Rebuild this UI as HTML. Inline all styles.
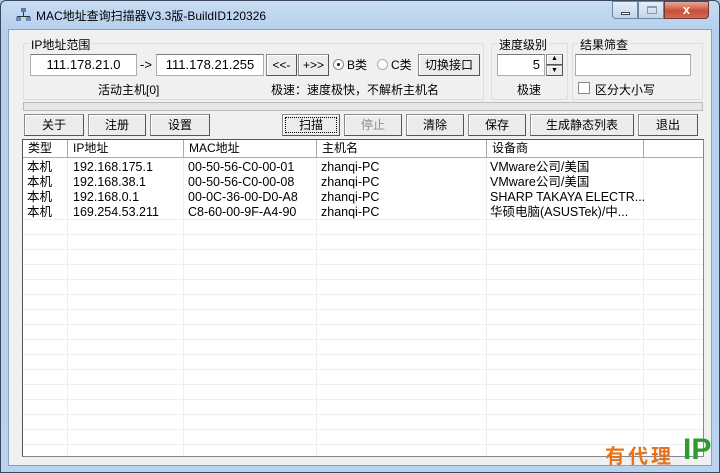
<!DOCTYPE html>
<html><head><meta charset="utf-8"><style>
*{box-sizing:border-box;margin:0;padding:0}
body{width:720px;height:473px;overflow:hidden;background:#a9c6e6;font-family:"Liberation Sans","Noto Sans CJK SC",sans-serif;font-size:12px;color:#000;position:relative}
.a{position:absolute}
.frame{left:0;top:0;width:720px;height:473px;border:1px solid #3b4a5e;border-radius:6px 6px 0 0;background:linear-gradient(#c8dcf2,#b5cfec 30px,#b9d3ef);}
.client{left:8px;top:29px;width:704px;height:437px;background:#f0f0f0;border:1px solid #8aa0bb}
.grp{border:1px solid #d5dfe5;border-radius:2px}
.lg{background:#f0f0f0;padding:0 2px;font-size:12px}
.inp{background:#fff;border:1px solid #abadb3;border-top-color:#7a7a7a;text-align:center;font-size:13px;line-height:20px}
.btn{border:1px solid #8c8c8c;border-right-color:#555;border-bottom-color:#555;box-shadow:inset 1px 1px 0 #fff;background:#ececec;text-align:center;line-height:20px;font-size:12px}
.hd{top:0;height:18px;border-right:1px solid #aaa;padding-left:5px;line-height:17px;background:#fff;border-bottom:1px solid #aaa}
.vl{top:18px;bottom:0;width:1px;background:#eee}
.hl{left:0;right:0;height:1px;background:#eee}
</style></head><body>
<div class="a frame"></div>
<svg class="a" style="left:16px;top:8px" width="16" height="14"><rect x="5" y="0" width="5" height="4" fill="#5a7ba8"/><rect x="7" y="4" width="1" height="4" fill="#333"/><rect x="1" y="8" width="13" height="1" fill="#333"/><rect x="0" y="9" width="5" height="4" fill="#6b8cbb"/><rect x="10" y="9" width="5" height="4" fill="#6b8cbb"/></svg>
<div class="a" style="left:36px;top:7px;font-size:12px;color:#000">MAC地址查询扫描器V3.3版-BuildID120326</div>
<div class="a" style="left:612px;top:1px;width:26px;height:18px;border:1px solid #6e86a3;border-radius:0 0 0 4px;background:linear-gradient(#e4eefa,#c2d5ec)"><div class="a" style="left:8px;top:10px;width:9px;height:3px;background:#fff;border:1px solid #445"></div></div>
<div class="a" style="left:638px;top:1px;width:26px;height:18px;border:1px solid #6e86a3;background:linear-gradient(#e4eefa,#c2d5ec)"><div class="a" style="left:8px;top:4px;width:10px;height:8px;border:1px solid #8899aa;border-top-width:2px"></div></div>
<div class="a" style="left:664px;top:1px;width:45px;height:18px;border:1px solid #6e3a32;border-radius:0 0 4px 0;background:linear-gradient(#e9a99a,#c7503a 55%,#d36c52);color:#fff;text-align:center;font-weight:bold;font-size:13px;line-height:16px">x</div>
<div class="a client"></div>

<div class="a grp" style="left:23px;top:43px;width:461px;height:57px"></div>
<div class="a lg" style="left:29px;top:36px">IP地址范围</div>
<div class="a inp" style="left:30px;top:54px;width:107px;height:22px">111.178.21.0</div>
<div class="a" style="left:140px;top:57px;font-size:13px">-&gt;</div>
<div class="a inp" style="left:156px;top:54px;width:108px;height:22px">111.178.21.255</div>
<div class="a btn" style="left:266px;top:54px;width:31px;height:22px">&lt;&lt;-</div>
<div class="a btn" style="left:298px;top:54px;width:31px;height:22px">+&gt;&gt;</div>
<div class="a" style="left:333px;top:59px;width:11px;height:11px;border-radius:50%;border:1px solid #888;background:#fff"><div class="a" style="left:3px;top:3px;width:3px;height:3px;border-radius:50%;background:#222"></div></div>
<div class="a" style="left:347px;top:56px">B类</div>
<div class="a" style="left:377px;top:59px;width:11px;height:11px;border-radius:50%;border:1px solid #aaa;background:#fff"></div>
<div class="a" style="left:391px;top:56px">C类</div>
<div class="a btn" style="left:418px;top:54px;width:62px;height:22px">切换接口</div>
<div class="a" style="left:98px;top:81px">活动主机[0]</div>
<div class="a" style="left:271px;top:81px">极速：速度极快，不解析主机名</div>

<div class="a grp" style="left:491px;top:43px;width:77px;height:57px"></div>
<div class="a lg" style="left:497px;top:36px">速度级别</div>
<div class="a inp" style="left:497px;top:54px;width:48px;height:22px;text-align:right;padding-right:4px">5</div>
<div class="a btn" style="left:546px;top:54px;width:17px;height:11px;line-height:8px;font-size:7px">▲</div>
<div class="a btn" style="left:546px;top:65px;width:17px;height:11px;line-height:9px;font-size:7px">▼</div>
<div class="a" style="left:517px;top:81px">极速</div>

<div class="a grp" style="left:572px;top:43px;width:131px;height:57px"></div>
<div class="a lg" style="left:578px;top:36px">结果筛查</div>
<div class="a inp" style="left:575px;top:54px;width:116px;height:22px"></div>
<div class="a" style="left:578px;top:82px;width:12px;height:12px;border:1px solid #888;background:#fff"></div>
<div class="a" style="left:595px;top:81px">区分大小写</div>

<div class="a" style="left:23px;top:102px;width:680px;height:9px;border:1px solid #bbb;background:#e6e6e6"></div>

<div class="a btn" style="left:24px;top:114px;width:60px;height:22px">关于</div>
<div class="a btn" style="left:88px;top:114px;width:58px;height:22px">注册</div>
<div class="a btn" style="left:150px;top:114px;width:60px;height:22px">设置</div>
<div class="a btn" style="left:282px;top:114px;width:58px;height:22px;outline:1px dotted #000;outline-offset:-4px">扫描</div>
<div class="a btn" style="left:344px;top:114px;width:58px;height:22px;color:#8d8d8d">停止</div>
<div class="a btn" style="left:406px;top:114px;width:58px;height:22px">清除</div>
<div class="a btn" style="left:468px;top:114px;width:58px;height:22px">保存</div>
<div class="a btn" style="left:530px;top:114px;width:104px;height:22px">生成静态列表</div>
<div class="a btn" style="left:638px;top:114px;width:60px;height:22px">退出</div>

<div class="a" style="left:22px;top:139px;width:682px;height:318px;background:#fff;border:1px solid #828790;border-left-color:#555;border-top-color:#555;overflow:hidden">
 <div class="a hd" style="left:0;width:45px">类型</div>
 <div class="a hd" style="left:45px;width:116px">IP地址</div>
 <div class="a hd" style="left:161px;width:133px">MAC地址</div>
 <div class="a hd" style="left:294px;width:170px">主机名</div>
 <div class="a hd" style="left:464px;width:157px">设备商</div>
 <div class="a hd" style="left:621px;width:60px"></div>
 <div class="a vl" style="left:44px"></div><div class="a vl" style="left:160px"></div><div class="a vl" style="left:293px"></div><div class="a vl" style="left:463px"></div><div class="a vl" style="left:620px"></div>
 <div class="a hl" style="top:79px"></div><div class="a hl" style="top:94px"></div><div class="a hl" style="top:109px"></div><div class="a hl" style="top:124px"></div><div class="a hl" style="top:139px"></div><div class="a hl" style="top:154px"></div><div class="a hl" style="top:169px"></div><div class="a hl" style="top:184px"></div><div class="a hl" style="top:199px"></div><div class="a hl" style="top:214px"></div><div class="a hl" style="top:229px"></div><div class="a hl" style="top:244px"></div><div class="a hl" style="top:259px"></div><div class="a hl" style="top:274px"></div><div class="a hl" style="top:289px"></div><div class="a hl" style="top:304px"></div>
 <div class="a" style="left:4px;top:20px;line-height:15px;width:700px;font-size:12.5px">
  <div style="position:relative;height:15px"><span class="a" style="left:0">本机</span><span class="a" style="left:46px">192.168.175.1</span><span class="a" style="left:161px">00-50-56-C0-00-01</span><span class="a" style="left:294px">zhanqi-PC</span><span class="a" style="left:463px">VMware公司/美国</span></div>
  <div style="position:relative;height:15px"><span class="a" style="left:0">本机</span><span class="a" style="left:46px">192.168.38.1</span><span class="a" style="left:161px">00-50-56-C0-00-08</span><span class="a" style="left:294px">zhanqi-PC</span><span class="a" style="left:463px">VMware公司/美国</span></div>
  <div style="position:relative;height:15px"><span class="a" style="left:0">本机</span><span class="a" style="left:46px">192.168.0.1</span><span class="a" style="left:161px">00-0C-36-00-D0-A8</span><span class="a" style="left:294px">zhanqi-PC</span><span class="a" style="left:463px">SHARP TAKAYA ELECTR...</span></div>
  <div style="position:relative;height:15px"><span class="a" style="left:0">本机</span><span class="a" style="left:46px">169.254.53.211</span><span class="a" style="left:161px">C8-60-00-9F-A4-90</span><span class="a" style="left:294px">zhanqi-PC</span><span class="a" style="left:463px">华硕电脑(ASUSTek)/中...</span></div>
 </div>
</div>
<div class="a" style="left:605px;top:440px;font-size:20px;color:#e8731c;font-weight:bold;letter-spacing:3px">有代理</div>
<div class="a" style="left:683px;top:435px;font-size:30px;color:#2e9b2e;font-weight:bold;line-height:30px">IP</div>
</body></html>
